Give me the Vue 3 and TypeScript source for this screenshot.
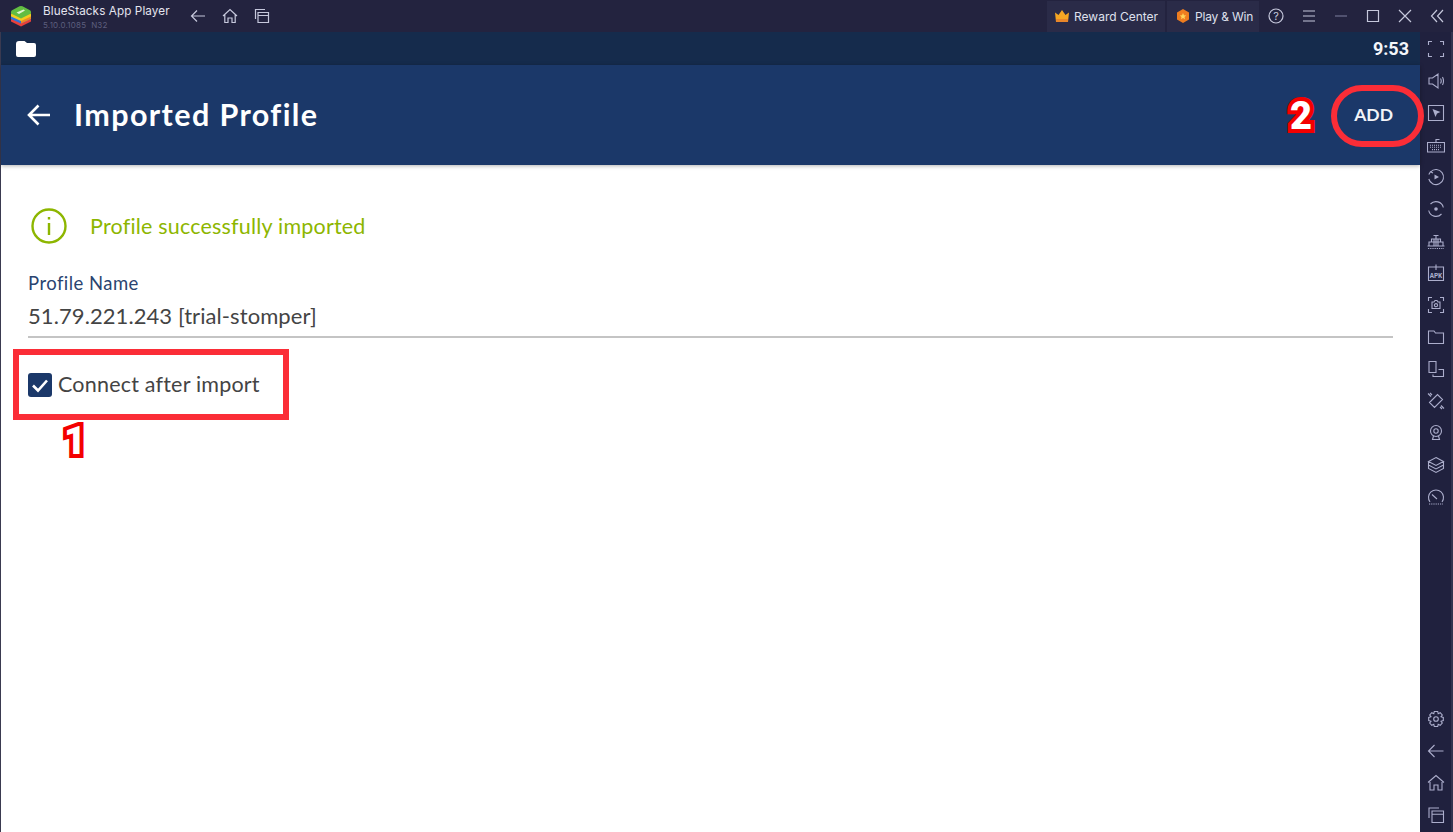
<script setup lang="ts">
const sideTop = ['full','sound','cursor','keyboard','replay','rotate','macro','apk','shot','folder','multi','erase','loc','layers','speed'];
const sideBottom = ['gear','back','home','recent'];
</script>

<template>
  <div class="player">
    <header class="titlebar">
      <svg class="logo" viewBox="0 0 22 22" width="22" height="22">
        <path d="M1 15 Q1 13.5 2.5 13 L11 9 L19.5 13 Q21 13.5 21 15 L21 16.5 L11 21.5 L1 16.5Z" fill="#e8403a"/>
        <path d="M1 12 Q1 10.5 2.5 10 L11 6 L19.5 10 Q21 10.5 21 12 L21 14 L11 18.5 L1 14Z" fill="#2b74dc"/>
        <path d="M11 6 L19.5 10 Q21 10.5 21 12 L21 14 L11 18.5Z" fill="#f08a24"/>
        <path d="M1 9.5 Q1 8 2.5 7.5 L11 3.5 L19.5 7.5 Q21 8 21 9.5 L21 11.5 L11 16 L1 11.5Z" fill="#f4cb1f"/>
        <path d="M1 7 Q1 5.5 2.5 5 L9.5 1.3 Q11 .7 12.5 1.3 L19.5 5 Q21 5.5 21 7 L21 8.5 L11 13.5 L1 8.5Z" fill="#62bd42"/>
        <path d="M6.5 7.5 13.5 4.5 15 5.5 9 9Z" fill="#e2f5cf"/>
      </svg>
      <div class="brand">
        <div class="brand-name">BlueStacks App Player</div>
        <div class="brand-ver">5.10.0.1085&nbsp; N32</div>
      </div>
      <nav class="title-nav">
        <svg viewBox="0 0 16 16" width="16" height="16"><path d="M15 8H1.5M7 2.5 1.5 8 7 13.5" class="ln"/></svg>
        <svg viewBox="0 0 16 16" width="16" height="16"><path d="M1 8 8 1.5 15 8M2.8 6.5V14.5H6V10H10V14.5H13.2V6.5" class="ln"/></svg>
        <svg viewBox="0 0 16 16" width="16" height="16"><path d="M1.5 11V1.5H11M4 4.5H14.5V14.5H4ZM4 7.5H14.5" class="ln"/></svg>
      </nav>
      <div class="spacer"></div>
      <div class="pill reward">
        <svg viewBox="0 0 14 12" width="14" height="12"><path d="M0 2.5 3.5 5 7 0 10.5 5 14 2.5 13 12H1Z" fill="#f5a623"/><path d="M1 9H13V12H1Z" fill="#e8862a"/></svg>
        <span>Reward Center</span>
      </div>
      <div class="pill play">
        <svg viewBox="0 0 14 14" width="14" height="14"><path d="M7 0 13 3.5V10.5L7 14 1 10.5V3.5Z" fill="#ee7d1f"/><path d="M7 4 8 6.2 10.2 6.4 8.5 7.9 9 10.2 7 9 5 10.2 5.5 7.9 3.8 6.4 6 6.2Z" fill="#ffd35a"/></svg>
        <span>Play &amp; Win</span>
      </div>
      <div class="win-ctrls">
        <svg viewBox="0 0 16 16" width="16" height="16"><circle cx="8" cy="8" r="7" class="ln"/><text x="8" y="11.5" class="q">?</text></svg>
        <svg viewBox="0 0 14 12" width="14" height="12"><path d="M1 1H13M1 6H13M1 11H13" class="ln"/></svg>
        <svg viewBox="0 0 14 14" width="14" height="14"><path d="M1 7H13" class="ln dim"/></svg>
        <svg viewBox="0 0 14 14" width="14" height="14"><path d="M1.5 1.5H12.5V12.5H1.5Z" class="ln"/></svg>
        <svg viewBox="0 0 14 14" width="14" height="14"><path d="M1 1 13 13M13 1 1 13" class="ln"/></svg>
        <svg viewBox="0 0 14 14" width="14" height="14"><path d="M7 1 1.5 7 7 13M13 1 7.5 7 13 13" class="ln"/></svg>
      </div>
    </header>

    <div class="body">
      <main class="screen">
        <div class="statusbar">
          <svg viewBox="0 0 20 16" width="20" height="16"><path d="M3 0H8.5L11 2H18Q20 2 20 4V14Q20 16 18 16H2Q0 16 0 14V3Q0 0 3 0Z" fill="#fff"/></svg>
          <span class="clock">9:53</span>
        </div>
        <div class="appbar">
          <svg class="back" viewBox="0 0 24 24" width="24" height="24"><path d="M23 12H2M11.5 2.5 2 12 11.5 21.5" fill="none" stroke="#fff" stroke-width="2.6"/></svg>
          <h1>Imported Profile</h1>
          <span class="add">ADD</span>
          <span class="num num2">2</span>
          <span class="ring"></span>
        </div>
        <section class="content">
          <div class="notice">
            <svg viewBox="0 0 36 36" width="36" height="36"><circle cx="18" cy="18" r="16.5" fill="none" stroke="#8db600" stroke-width="2.4"/><path d="M18 15V27M18 9V11.5" stroke="#8db600" stroke-width="2.4"/></svg>
            <span class="notice-text">Profile successfully imported</span>
          </div>
          <label class="f-label">Profile Name</label>
          <div class="f-value">51.79.221.243 [trial-stomper]</div>
          <div class="check-row">
            <span class="box"><svg viewBox="0 0 24 24" width="24" height="24"><path d="M5 12.5 10 17.5 19 7.5" fill="none" stroke="#fff" stroke-width="2.6"/></svg></span>
            <span class="check-label">Connect after import</span>
            <span class="frame"></span>
            <span class="num num1">1</span>
          </div>
        </section>
      </main>

      <aside class="sidebar">
        <div class="side-group">
          <svg v-for="n in sideTop" :key="n" viewBox="0 0 18 18" width="18" height="18" class="side-ico">
            <path v-if="n==='full'" d="M1.5 5V1.5H5M13 1.5H16.5V5M16.5 13V16.5H13M5 16.5H1.5V13"/>
            <path v-else-if="n==='sound'" d="M2 6H5.5L11 2V16L5.5 12H2ZM13.5 6.5Q15 9 13.5 11.5M15.5 5Q17.5 9 15.5 13"/>
            <g v-else-if="n==='cursor'"><path d="M1.5 1.5H16.5V16.5H1.5Z"/><path d="M5.5 5 13.5 8 10 9.5 8.5 13Z" class="fill"/></g>
            <g v-else-if="n==='keyboard'"><path d="M.5 6.5H17.5V16H.5ZM9 6.5V3.5H12.5"/><path d="M3 9.2H15M3 11.2H15M5 13.6H13" stroke-dasharray="1 1"/></g>
            <g v-else-if="n==='replay'"><path d="M3.5 4A7.5 7.5 0 1 1 1.8 11M1.8 6.5 3.5 3.8 6 5"/><path d="M7.5 6.5 12 9 7.5 11.5Z" class="fill"/></g>
            <g v-else-if="n==='rotate'"><path d="M3.5 4A7.5 7.5 0 0 1 16.3 7.5M14.5 14A7.5 7.5 0 0 1 1.7 10.5"/><circle cx="9" cy="9" r="1.8" class="fill"/></g>
            <g v-else-if="n==='macro'"><path d="M.5 14H17.5M2 14V10H16V14M4.5 10V7H13.5V10M7 7V14M9 7V14M11 7V14M9 7V3M6.5 3.5H11.5"/><path d="M1 16.5H17" stroke-dasharray="1.2 1"/></g>
            <g v-else-if="n==='apk'"><path d="M7 3H1.5V16.5H16.5V3H11M9 .5V6M6.5 3H11.5"/><text x="9" y="14" class="apk">APK</text></g>
            <g v-else-if="n==='shot'"><path d="M1.5 5V1.5H5M13 1.5H16.5V5M16.5 13V16.5H13M5 16.5H1.5V13M5 6H7L8 4.5H10L11 6H13V12.5H5Z"/><circle cx="9" cy="9.2" r="1.6"/></g>
            <path v-else-if="n==='folder'" d="M1.5 3H7L8.5 5H16.5V15.5H1.5Z"/>
            <path v-else-if="n==='multi'" d="M2 1.5H9V12.5H2ZM11.5 9.5H16.5V16.5H6V14.5"/>
            <path v-else-if="n==='erase'" d="M2.5 10.5 10.5 2.5 15.5 7.5 7.5 15.5ZM1 1.5 4 4.5M3 1 5 3M14 13.5 17 16.5M13 15 15 17"/>
            <g v-else-if="n==='loc'"><circle cx="9" cy="7" r="5.5"/><circle cx="9" cy="7" r="2.2"/><path d="M6.5 12 5.5 15.5H12.5L11.5 12"/></g>
            <path v-else-if="n==='layers'" d="M9 1.5 16.5 5.5 9 9.5 1.5 5.5ZM1.5 5.5V12.5L9 16.5 16.5 12.5V5.5M1.5 9 9 13 16.5 9"/>
            <g v-else-if="n==='speed'"><path d="M3 14A7.5 7.5 0 1 1 15 14M5 6.5 10 11"/><path d="M2 16H16" stroke-dasharray="1.2 1"/></g>
          </svg>
        </div>
        <div class="side-group bottom">
          <svg v-for="n in sideBottom" :key="n" viewBox="0 0 18 18" width="18" height="18" class="side-ico">
            <g v-if="n==='gear'"><path d="M7.3 1.5H10.7L11.2 3.7 13.2 2.7 15.3 5 14 6.8 16.3 7.5V10.5L14 11.2 15.3 13 13.2 15.3 11.2 14.3 10.7 16.5H7.3L6.8 14.3 4.8 15.3 2.7 13 4 11.2 1.7 10.5V7.5L4 6.8 2.7 5 4.8 2.7 6.8 3.7Z"/><circle cx="9" cy="9" r="2.3"/></g>
            <path v-else-if="n==='back'" d="M16.5 9H1.5M7.5 3 1.5 9 7.5 15"/>
            <path v-else-if="n==='home'" d="M1 8.5 9 1.5 17 8.5M3 6.8V16H7V11H11V16H15V6.8"/>
            <path v-else-if="n==='recent'" d="M2 12V2H12M5 5H16.5V16.5H5ZM5 8.2H16.5"/>
          </svg>
        </div>
      </aside>
    </div>
  </div>
</template>

<style>
html, body { margin: 0; background: #fff; }
</style>

<style scoped>
.player {
  width: 1453px; height: 832px; display: flex; flex-direction: column; overflow: hidden;
  font-family: Inter, "Liberation Sans", sans-serif; background: #fff;
}
.ln { fill: none; stroke: #c6c8dc; stroke-width: 1.2; }
.ln.dim { stroke: #6e7090; }
.q { font: 11px Inter, sans-serif; fill: #c6c8dc; text-anchor: middle; }

.titlebar {
  height: 32px; flex: none; display: flex; align-items: center; background: #23233f; color: #e3e4ee;
}
.logo { margin-left: 10px; margin-top: -1px; flex: none; }
.brand { margin-left: 11px; width: 145px; }
.brand-name { font-size: 11.7px; line-height: 14px; margin-top: 1px; letter-spacing: .1px; white-space: nowrap; }
.brand-ver { font-size: 8px; line-height: 10px; margin-top: 2px; color: #5d5f7e; letter-spacing: .2px; white-space: nowrap; }
.title-nav { display: flex; gap: 16px; align-items: center; margin-left: 2px; }
.spacer { flex: 1; }
.pill {
  height: 31px; display: flex; align-items: center; gap: 5px; background: #2a2b48; font-size: 12px; color: #dfe0ec;
  white-space: nowrap; box-sizing: border-box;
}
.reward { width: 118px; padding-left: 8px; margin-right: 2px; }
.play { width: 92px; padding-left: 9px; gap: 5px; letter-spacing: -.2px; }
.win-ctrls { display: flex; align-items: center; gap: 18px; width: 194px; box-sizing: border-box; padding-left: 9px; }

.body { flex: 1; display: flex; min-height: 0; }
.screen { flex: 1; display: flex; flex-direction: column; min-width: 0; border-left: 1px solid #3a3a50; }
.statusbar {
  height: 33px; flex: none; background: #152b4c; display: flex; align-items: center; justify-content: space-between;
  padding: 0 11px 0 15px;
}
.clock { font: 700 18px/1 Roboto, sans-serif; color: #f4f6fa; }
.appbar {
  height: 100px; flex: none; background: #1b3869; display: flex; align-items: center; position: relative;
  box-shadow: 0 1px 4px rgba(0,0,0,.3); z-index: 1;
}
.back { margin-left: 26px; flex: none; }
h1 { margin: -2px 0 0 23px; font: 700 30.5px/1 Lato, sans-serif; color: #fff; letter-spacing: 1.4px; white-space: nowrap; }
.add { position: absolute; right: 27px; top: 39px; font: 700 17.5px/22px Lato, "Open Sans", sans-serif; color: #f2f4f8; }
.ring {
  position: absolute; left: 1330px; top: 20px; width: 93px; height: 62px; box-sizing: border-box;
  border: 6px solid #fb2d37; border-radius: 31px;
}
.num {
  position: absolute; font: 900 38px/1 Roboto, sans-serif; color: #fff;
  -webkit-text-stroke: 8px #f40000; paint-order: stroke fill;
}
.num2 { left: 1289px; top: 32px; }
.num1 { left: 36px; top: 49px; }

.content { flex: 1; background: #fff; padding: 43px 27px 0 26px; position: relative; }
.notice { display: flex; align-items: center; gap: 23px; margin-left: 4px; height: 36px; color: #8db600; font: 400 21.5px/1 Lato, sans-serif; letter-spacing: .2px; }
.notice-text { margin-top: 1px; }
.f-label { display: block; margin-top: 28px; font: 400 18.5px/22px Lato, sans-serif; color: #2a4470; margin-left: 1px; letter-spacing: .45px; }
.f-value {
  margin-top: 8px; height: 36px; box-sizing: border-box; border-bottom: 2px solid #c4c4c4; margin-left: 1px;
  font: 400 22px/28px Lato, sans-serif; color: #444; letter-spacing: .08px;
}
.check-row { display: flex; align-items: center; margin-top: 35px; height: 24px; position: relative; margin-left: 1px; }
.box { width: 24px; height: 24px; border-radius: 3px; background: #1b3869; flex: none; }
.box svg { display: block; }
.check-label { margin-left: 6px; font: 400 21.5px/1 Lato, sans-serif; color: #444; letter-spacing: .2px; }
.frame {
  position: absolute; left: -15px; top: -24px; width: 276px; height: 71px; box-sizing: border-box; border: 6px solid #fb2d37;
}

.sidebar {
  width: 33px; flex: none; background: #20213e; display: flex; flex-direction: column; justify-content: space-between;
  align-items: center; padding: 8px 0 8px; box-sizing: border-box; border-right: 2px solid #33344f;
}
.side-group { display: flex; flex-direction: column; gap: 14px; }
.side-ico { fill: none; stroke: #acaecc; stroke-width: 1.1; display: block; }
.side-ico .fill { fill: #acaecc; stroke: none; }
.apk { font: 700 7px "Liberation Mono", monospace; fill: #acaecc; stroke: none; text-anchor: middle; }
</style>
